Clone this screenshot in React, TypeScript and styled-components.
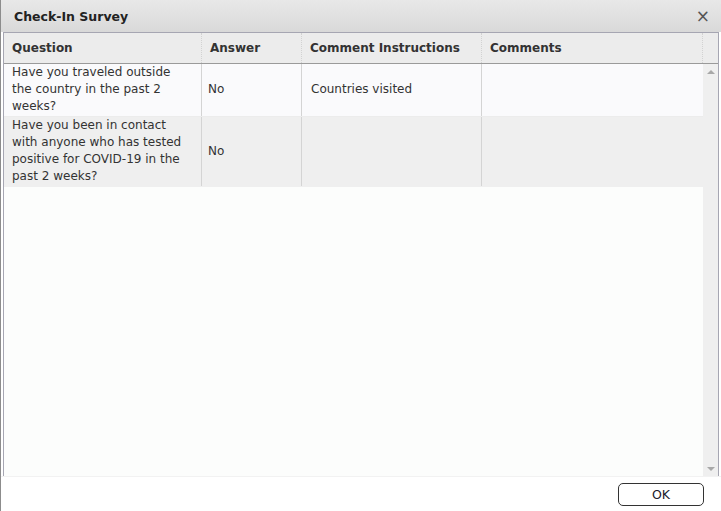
import React from "react";
import styled, { createGlobalStyle } from "styled-components";

const Global = createGlobalStyle`
  html, body { margin: 0; padding: 0; background: #ffffff; }
  body { font-family: "DejaVu Sans", Verdana, sans-serif; }
`;

const COLS = "198px 100px 180px 1fr";

const Dialog = styled.div`
  width: 721px;
  height: 511px;
  box-sizing: border-box;
  display: flex;
  flex-direction: column;
  background: #ffffff;
  border-left: 1px solid #8c8c8c;
`;

const TitleBar = styled.div`
  height: 32px;
  flex: none;
  display: flex;
  align-items: center;
  justify-content: space-between;
  padding: 0 11px 0 13px;
  background: linear-gradient(#e8e8e8, #d9d9d9);
  font-size: 12.5px;
  font-weight: bold;
  color: #222;
`;

const Close = styled.span`
  font-size: 17px;
  font-weight: normal;
  color: #555;
  line-height: 1;
`;

const Grid = styled.div`
  flex: 1;
  margin: 0 2px 0 2px;
  border: 1px solid #a6a6b2;
  border-bottom: none;
  display: flex;
  flex-direction: column;
  min-height: 0;
`;

const HeaderRow = styled.div`
  display: grid;
  grid-template-columns: ${COLS} 15px;
  height: 30px;
  background: #ececec;
  border-bottom: 1px solid #9a9a9a;
  flex: none;
`;

const HeaderCell = styled.div<{ $last?: boolean }>`
  display: flex;
  align-items: center;
  padding: 0 8px;
  font-size: 12px;
  font-weight: bold;
  color: #333;
  border-right: ${(p) => (p.$last ? "none" : "1px dotted #d2d2d2")};
`;

const Body = styled.div`
  flex: 1;
  display: flex;
  min-height: 0;
  background: #fcfdfc;
`;

const Rows = styled.div`
  flex: 1;
  display: flex;
  flex-direction: column;
`;

const Row = styled.div<{ $alt?: boolean }>`
  display: grid;
  grid-template-columns: ${COLS};
  background: ${(p) => (p.$alt ? "#efefef" : "#fafafc")};
  border-bottom: 1px solid ${(p) => (p.$alt ? "#efefef" : "#ececec")};
`;

const Cell = styled.div<{ $pad?: number; $top?: boolean }>`
  display: flex;
  align-items: ${(p) => (p.$top ? "flex-start" : "center")};
  padding: 0 12px 1px ${(p) => p.$pad ?? 8}px;
  font-size: 12px;
  line-height: 17px;
  color: #333;
  border-right: 1px solid #d4d4d4;
  &:last-child { border-right: none; }
`;

const Scrollbar = styled.div`
  width: 15px;
  flex: none;
  display: flex;
  flex-direction: column;
  justify-content: space-between;
  align-items: center;
  padding: 6px 0 5px;
  background: #efefef;
`;

const Arrow = styled.div<{ $down?: boolean }>`
  width: 0;
  height: 0;
  border-left: 4px solid transparent;
  border-right: 4px solid transparent;
  ${(p) =>
    p.$down
      ? "border-top: 4px solid #a8a8a8;"
      : "border-bottom: 4px solid #a8a8a8;"}
`;

const Footer = styled.div`
  height: 33px;
  flex: none;
  display: flex;
  align-items: center;
  justify-content: flex-end;
  padding: 1px 17px 0 0;
  background: #ffffff;
  border-top: 1px solid #f2f2f2;
`;

const OkButton = styled.button`
  width: 86px;
  height: 23px;
  border: 1px solid #333;
  border-radius: 5px;
  background: #ffffff;
  font-family: "DejaVu Sans", Verdana, sans-serif;
  font-size: 12.5px;
  color: #1a1a2a;
  padding: 0;
`;

const rows = [
  {
    q: "Have you traveled outside the country in the past 2 weeks?",
    a: "No",
    ci: "Countries visited",
    c: "",
  },
  {
    q: "Have you been in contact with anyone who has tested positive for COVID-19 in the past 2 weeks?",
    a: "No",
    ci: "",
    c: "",
  },
];

export default function App() {
  return (
    <>
      <Global />
      <Dialog>
        <TitleBar>
          <span>Check-In Survey</span>
          <Close>×</Close>
        </TitleBar>
        <Grid>
          <HeaderRow>
            <HeaderCell>Question</HeaderCell>
            <HeaderCell>Answer</HeaderCell>
            <HeaderCell>Comment Instructions</HeaderCell>
            <HeaderCell>Comments</HeaderCell>
            <HeaderCell $last />
          </HeaderRow>
          <Body>
            <Rows>
              {rows.map((r, i) => (
                <Row key={i} $alt={i % 2 === 1}>
                  <Cell $top>{r.q}</Cell>
                  <Cell $pad={6}>{r.a}</Cell>
                  <Cell $pad={9}>{r.ci}</Cell>
                  <Cell>{r.c}</Cell>
                </Row>
              ))}
            </Rows>
            <Scrollbar>
              <Arrow />
              <Arrow $down />
            </Scrollbar>
          </Body>
        </Grid>
        <Footer>
          <OkButton>OK</OkButton>
        </Footer>
      </Dialog>
    </>
  );
}
